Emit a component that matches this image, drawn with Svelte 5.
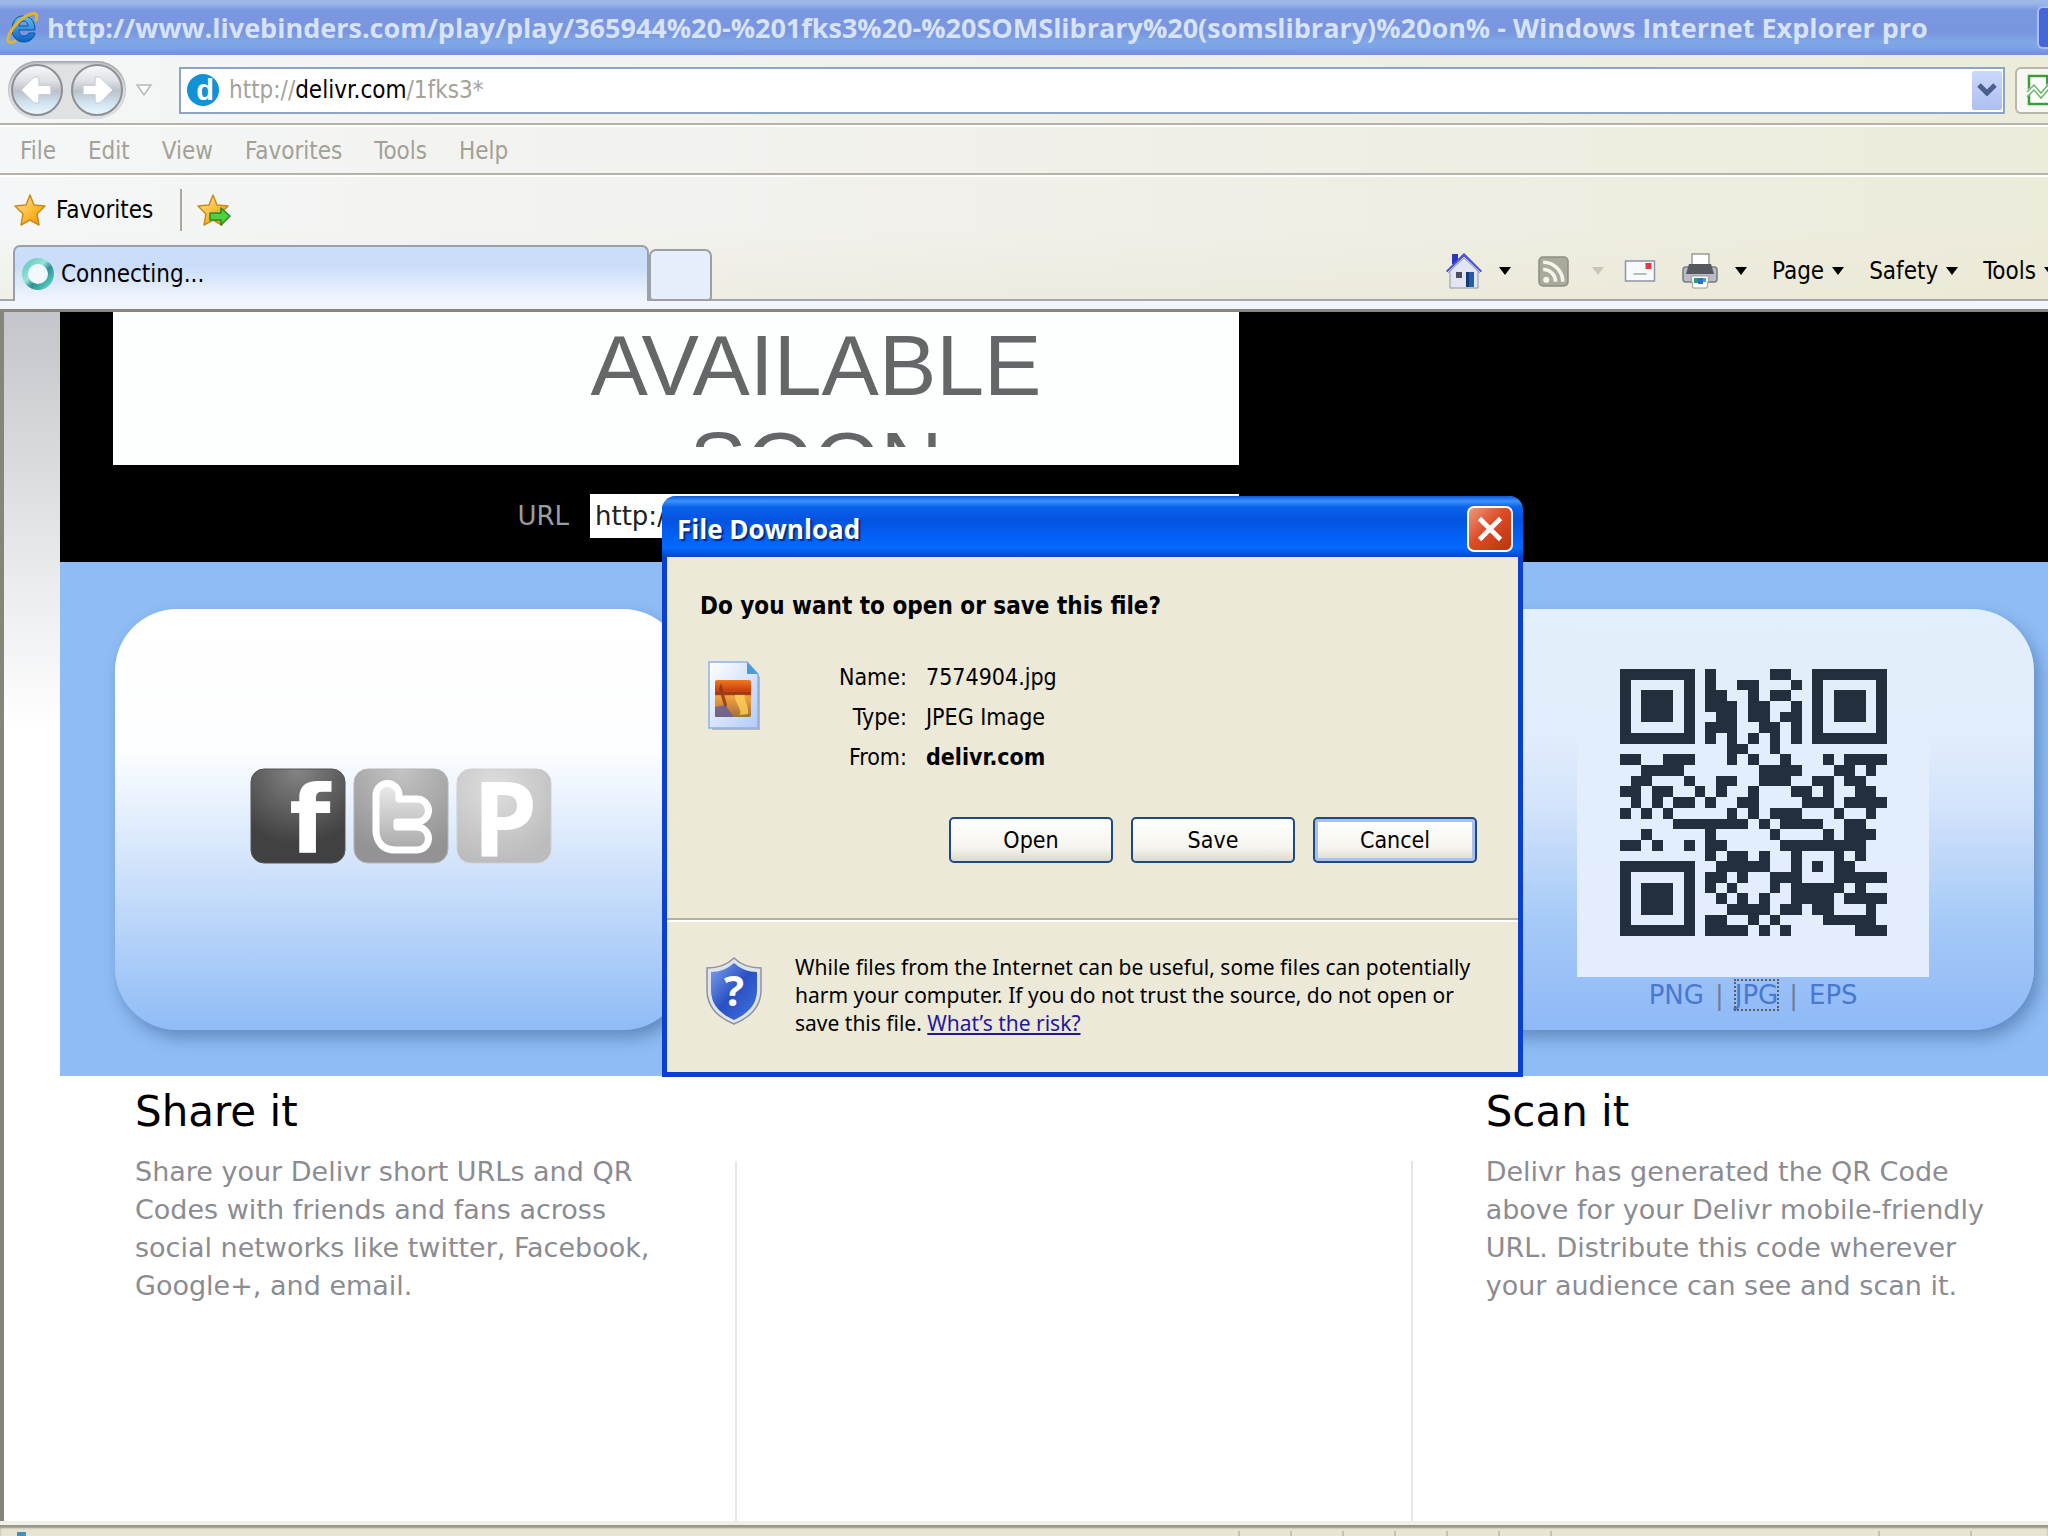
<script>
  const menus = ['File', 'Edit', 'View', 'Favorites', 'Tools', 'Help'];
  const commands = ['Page', 'Safety', 'Tools'];
  const formats = ['PNG', 'JPG', 'EPS'];

  // Dark modules of each QR row, as inclusive column ranges.
  const qrRows = [
    '0-6 8 14-15 18-24',
    '0 6 8 11-12 16 18 24',
    '0 2-4 6 8-9 12 14-15 18 20-22 24',
    '0 2-4 6 8-10 12-13 16 18 20-22 24',
    '0 2-4 6 9-10 12-13 15-16 18 20-22 24',
    '0 6 8-10 13-14 16 18 24',
    '0-6 8 10 12 14 16 18-24',
    '10-11 14',
    '0-1 4-6 10 12 15 19 21-24',
    '2-5 13-16 20-21 23',
    '1-2 6 9-10 13-15 18-19 21-22',
    '0-1 3-4 7 9 12 16-17 19 22-23',
    '1 3 5-6 8 11-12 17-19 21-24',
    '0 2 4 10 12 14-16 20 23',
    '5-11 13 15-18 21-22',
    '2 8 14 19 21-23',
    '0-1 3 6 8-9 15-22',
    '8 10-11 13 16 20 22',
    '0-6 9-13 16 18 20-21',
    '0 6 8-9 11 14-16 20-24',
    '0 2-4 6 8 10 14 16-20 22',
    '0 2-4 6 9 11 13 16-19 21-24',
    '0 2-4 6 10-13 15-16 18-19 23',
    '0 6 8-9 12 14 19-23',
    '0-6 8-11 13 15 22-24'
  ];
  const modules = qrRows.flatMap((row, y) =>
    row.split(' ').map((part) => {
      const [from, to = from] = part.split('-').map(Number);
      return { x: from, y, w: to - from + 1 };
    })
  );
</script>

<div class="window">
  <header class="titlebar">
    <svg class="ie" viewBox="0 0 34 36" aria-hidden="true">
      <defs>
        <linearGradient id="ieBlue" x1="0" y1="0" x2="0" y2="1">
          <stop offset="0" stop-color="#5cc4f5" /><stop offset="1" stop-color="#0b5fc0" />
        </linearGradient>
      </defs>
      <path d="M30 20H14c0 4 2 6 5 6 2 0 4-1 5-3h6c-1 6-6 9-11 9-8 0-12-6-12-13S11 6 18 6c8 0 12 6 12 14zM14 16h9c0-3-2-5-4-5-3 0-5 2-5 5z" fill="url(#ieBlue)" stroke="#0d4fa5" stroke-width="1" />
      <path d="M31 10c2-5 0-8-5-6C18 6 8 16 4 25c-3 7 0 9 6 6" fill="none" stroke="#e5b32b" stroke-width="3" stroke-linecap="round" />
    </svg>
    <h1>http://www.livebinders.com/play/play/365944%20-%201fks3%20-%20SOMSlibrary%20(somslibrary)%20on% - Windows Internet Explorer pro</h1>
    <button class="winbtn" aria-label="Minimize"></button>
  </header>

  <div class="navrow">
    <div class="travel">
      <button class="round" aria-label="Back">
        <svg viewBox="0 0 52 52"><path d="M9 26 23 12h5v9h13v10H28v9h-5z" fill="#fff" stroke="#c3c8d0" stroke-width="1" stroke-linejoin="round" /></svg>
      </button>
      <button class="round" aria-label="Forward">
        <svg viewBox="0 0 52 52"><path d="M43 26 29 12h-5v9H11v10h13v9h5z" fill="#fff" stroke="#c3c8d0" stroke-width="1" stroke-linejoin="round" /></svg>
      </button>
    </div>
    <button class="recent" aria-label="Recent pages">
      <svg viewBox="0 0 18 14"><path d="M2 2h14L9 12z" fill="#fafafa" stroke="#b9b9b9" stroke-width="1.5" /></svg>
    </button>
    <div class="address">
      <svg class="fav" viewBox="0 0 34 34" aria-hidden="true">
        <circle cx="17" cy="17" r="16" fill="#0f92d6" />
        <text x="19" y="27" text-anchor="middle" class="favd">d</text>
      </svg>
      <p>http://<b>delivr.com</b>/1fks3*</p>
      <button class="drop" aria-label="Show addresses">
        <svg viewBox="0 0 20 16"><path d="M2 3l8 8 8-8" fill="none" stroke="#4a5f8c" stroke-width="5" /></svg>
      </button>
    </div>
    <button class="compat" aria-label="Compatibility view">
      <svg viewBox="0 0 36 32">
        <path d="M2 30V2h18l9 9v19z" fill="#fff" stroke="#3c9b3c" stroke-width="2.5" />
        <path d="M20 2v9h9" fill="none" stroke="#3c9b3c" stroke-width="2" />
        <path d="M0 20l7-7 7 8 7-8 7 8 6-7" fill="none" stroke="#fff" stroke-width="5" />
        <path d="M0 18l7-7 7 8 7-8 7 8 6-7M0 23l7-7 7 8 7-8 7 8 6-7" fill="none" stroke="#6db56d" stroke-width="1.5" />
      </svg>
    </button>
  </div>

  <nav class="menubar" aria-label="Menu">
    {#each menus as item}<button>{item}</button>{/each}
  </nav>

  <div class="lower">
    <div class="favrow">
      <button class="favorites">
        <svg viewBox="0 0 34 34"><path d="M17 2l4 10 11 1-8 8 2 11-9-5-9 5 2-11-8-8 11-1z" fill="url(#gold)" stroke="#c98a1c" stroke-width="1.5" stroke-linejoin="round" />
          <defs><linearGradient id="gold" x1="0" y1="0" x2="1" y2="1"><stop offset="0" stop-color="#ffe9a0" /><stop offset=".6" stop-color="#fbb52a" /><stop offset="1" stop-color="#f08a10" /></linearGradient></defs>
        </svg>
        Favorites
      </button>
      <button class="addfav" aria-label="Add to Favorites Bar">
        <svg viewBox="0 0 36 34"><path d="M17 2l4 10 11 1-8 8 2 11-9-5-9 5 2-11-8-8 11-1z" fill="url(#gold)" stroke="#c98a1c" stroke-width="1.5" stroke-linejoin="round" />
          <path d="M14 20h11v-5l9 8-9 9v-5H14z" fill="#4fd03c" stroke="#27892a" stroke-width="1.5" stroke-linejoin="round" />
        </svg>
      </button>
    </div>

    <div class="tabrow">
      <button class="tab">
        <svg viewBox="0 0 34 34">
          <defs><linearGradient id="ring" x1="0" y1="0" x2="1" y2="1"><stop offset="0" stop-color="#5fc8bd" /><stop offset=".4" stop-color="#9be3da" /><stop offset=".6" stop-color="#2f8f95" /><stop offset="1" stop-color="#57d6c2" /></linearGradient></defs>
          <circle cx="17" cy="17" r="13" fill="#f3f8ff" stroke="url(#ring)" stroke-width="6" />
        </svg>
        Connecting...
      </button>
      <button class="newtab" aria-label="New tab"></button>
      <div class="cmdbar">
        <button class="ico home" aria-label="Home">
          <svg viewBox="0 0 36 36">
            <path d="M6 1h6v10H6z" fill="#2b35c4" />
            <path d="M4 18 18 5l14 13v17H4z" fill="#e3e6f2" stroke="#8d93ad" stroke-width="1" />
            <path d="M1 19 18 2l17 17" fill="none" stroke="#4a54d0" stroke-width="3" />
            <path d="M1 20 18 4l17 16" fill="none" stroke="#dfe3ff" stroke-width="1" />
            <rect x="10" y="19" width="6" height="6" fill="#4a4f60" /><rect x="20" y="19" width="8" height="15" fill="#235ea8" /><rect x="20" y="19" width="3" height="15" fill="#123a76" />
          </svg>
        </button>
        <span class="caret"></span>
        <button class="ico rss" aria-label="Feeds">
          <svg viewBox="0 0 30 30">
            <rect x="1" y="1" width="28" height="28" rx="4" fill="#aaa99b" stroke="#8f8e80" stroke-width="1.5" />
            <circle cx="8" cy="23" r="3" fill="#f5f4ea" />
            <path d="M5 13a12 12 0 0 1 12 12M5 6a19 19 0 0 1 19 19" fill="none" stroke="#f5f4ea" stroke-width="3.5" />
          </svg>
        </button>
        <span class="caret off"></span>
        <button class="ico mail" aria-label="Read mail">
          <svg viewBox="0 0 31 22">
            <rect x="1" y="1" width="29" height="20" fill="#f8f9fb" stroke="#8f95a8" stroke-width="1.5" />
            <rect x="21" y="3" width="6" height="6" fill="#dd3b46" /><path d="M9 14h13" stroke="#9aa" stroke-width="1.5" />
          </svg>
        </button>
        <button class="ico print" aria-label="Print">
          <svg viewBox="0 0 36 36">
            <rect x="10" y="1" width="17" height="14" fill="#fff" stroke="#9a9a9a" stroke-width="1.5" />
            <rect x="1" y="14" width="34" height="15" rx="3" fill="#b9bcc4" stroke="#777b84" stroke-width="1.5" />
            <path d="M7 11h22l3 10H4z" fill="#55585e" />
            <path d="M9 23h18l-2 12H11z" fill="#fff" stroke="#999" stroke-width="1" />
            <path d="M12 25h4v5h-4z" fill="#2c9c6a" /><path d="M16 25h5v6h-5z" fill="#2b6fd0" /><path d="M21 25h3v4h-3z" fill="#24b6c0" />
          </svg>
        </button>
        <span class="caret"></span>
        {#each commands as cmd}
          <button class="cmd">{cmd}<span class="caret"></span></button>
        {/each}
      </div>
    </div>
  </div>

  <main class="viewport">
    <div class="page">
      <section class="hero">
        <div class="preview"><p>AVAILABLE<br />SOON</p></div>
        <div class="urlrow">
          <label for="url">URL</label>
          <input id="url" type="text" value="http://delivr.com/1fks3" />
        </div>
      </section>

      <section class="band">
        <div class="card">
          <div class="social">
            <a href="#facebook" aria-label="Facebook">
              <svg viewBox="0 0 96 96">
                <defs><radialGradient id="fbg" cx=".5" cy="0" r=".8"><stop offset="0" stop-color="#858585" /><stop offset="1" stop-color="#414142" /></radialGradient></defs>
                <rect x="1" y="1" width="94" height="94" rx="13" fill="url(#fbg)" stroke="#555" />
                <text x="60" y="85" text-anchor="middle" class="ff">f</text>
              </svg>
            </a>
            <a href="#twitter" aria-label="Twitter">
              <svg viewBox="0 0 96 96">
                <defs>
                  <radialGradient id="twg" cx=".5" cy="0" r=".9"><stop offset="0" stop-color="#c4c4c4" /><stop offset="1" stop-color="#939393" /></radialGradient>
                  <linearGradient id="twt" x1="0" y1="0" x2="0" y2="1"><stop offset="0" stop-color="#ececec" /><stop offset="1" stop-color="#a9a9a9" /></linearGradient>
                </defs>
                <rect x="1" y="1" width="94" height="94" rx="14" fill="url(#twg)" stroke="#b5b5b5" />
                <path d="M23 27a11 11 0 0 1 23 0v4h18a11 11 0 0 1 0 23H44v5h20a11 11 0 0 1 0 23H42c-12 0-19-8-19-20z" fill="url(#twt)" stroke="#fff" stroke-width="7" stroke-linejoin="round" />
              </svg>
            </a>
            <a href="#posterous" aria-label="Posterous">
              <svg viewBox="0 0 96 96">
                <defs><radialGradient id="pg" cx=".4" cy=".2" r=".8"><stop offset="0" stop-color="#dedede" /><stop offset="1" stop-color="#bcbcbc" /></radialGradient></defs>
                <rect x="1" y="1" width="94" height="94" rx="14" fill="url(#pg)" stroke="#cfcfcf" />
                <text x="49" y="88" text-anchor="middle" class="pp">P</text>
              </svg>
            </a>
          </div>
        </div>
        <div class="card"></div>
        <div class="card tinted">
          <div class="qr">
            <svg viewBox="0 0 25 25" shape-rendering="crispEdges" role="img" aria-label="QR code">
              {#each modules as m}<rect x={m.x} y={m.y} width={m.w} height="1" />{/each}
            </svg>
          </div>
          <p class="formats">
            {#each formats as f, i}{#if i}<span>|</span>{/if}<a href="#{f}" class:focused={f === 'JPG'}>{f}</a>{/each}
          </p>
        </div>
      </section>

      <section class="info">
        <article>
          <h2>Share it</h2>
          <p>Share your Delivr short URLs and QR Codes with friends and fans across social networks like twitter, Facebook, Google+, and email.</p>
        </article>
        <article><h2></h2><p></p></article>
        <article>
          <h2>Scan it</h2>
          <p>Delivr has generated the QR Code above for your Delivr mobile-friendly URL. Distribute this code wherever your audience can see and scan it.</p>
        </article>
      </section>
    </div>
  </main>

  <footer class="status">
    <span class="dot"></span>
    <div class="cells"><i></i><i></i><i></i><i></i><i></i><i></i><i></i><i class="zone"></i><i class="prot"></i></div>
  </footer>

  <div class="dialog" role="dialog" aria-labelledby="dlgtitle">
    <div class="dlgbar">
      <h2 id="dlgtitle">File Download</h2>
      <button class="close" aria-label="Close">
        <svg viewBox="0 0 24 24"><path d="M3 3l18 18M21 3L3 21" stroke="#fff" stroke-width="4" /></svg>
      </button>
    </div>
    <div class="dlgmain">
      <h3>Do you want to open or save this file?</h3>
      <div class="file">
        <svg class="jpg" viewBox="0 0 54 70" aria-hidden="true">
          <defs>
            <linearGradient id="sheet" x1="0" y1="0" x2="1" y2="1"><stop offset="0" stop-color="#fff" /><stop offset="1" stop-color="#b3cbf7" /></linearGradient>
            <linearGradient id="sun" x1="0" y1="0" x2="0" y2="1"><stop offset="0" stop-color="#f07a1c" /><stop offset=".3" stop-color="#c83c10" /><stop offset=".45" stop-color="#f6a040" /><stop offset="1" stop-color="#a0703c" /></linearGradient>
          </defs>
          <path d="M4 4h38l10 12v53H4z" fill="#8d8f94" opacity=".55" />
          <path d="M1 1h38l11 12v54H1z" fill="url(#sheet)" stroke="#8fb0ea" stroke-width="1.5" />
          <path d="M39 1v12h11z" fill="#4a9bd8" />
          <rect x="7" y="19" width="36" height="37" rx="2" fill="url(#sun)" />
          <path d="M27 33h10c-2 6 4 10 3 20l-8 1c2-8-6-12-5-21z" fill="#ffd65c" opacity=".75" />
          <path d="M7 31h36v3H7zM13 22l6 22-2 4-6-20z" fill="#8a3412" opacity=".8" />
          <path d="M7 46l10-2 9 12H7z" fill="#5a5ba8" opacity=".7" />
        </svg>
        <dl>
          <dt>Name:</dt><dd>7574904.jpg</dd>
          <dt>Type:</dt><dd>JPEG Image</dd>
          <dt>From:</dt><dd><b>delivr.com</b></dd>
        </dl>
      </div>
      <div class="actions">
        <button>Open</button><button>Save</button><button class="default">Cancel</button>
      </div>
    </div>
    <div class="warn">
      <svg class="shield" viewBox="0 0 56 68" aria-hidden="true">
        <defs><linearGradient id="shd" x1="0" y1="0" x2="1" y2="1"><stop offset="0" stop-color="#7fa3ee" /><stop offset=".5" stop-color="#2a50c4" /><stop offset="1" stop-color="#3f74e0" /></linearGradient></defs>
        <path d="M28 1c7 7 16 10 27 10v22c0 16-10 27-27 34C11 60 1 49 1 33V11c11 0 20-3 27-10z" fill="#dfe3ea" stroke="#8d939f" stroke-width="1.5" />
        <path d="M28 6c7 6 14 9 23 9v18c0 14-8 23-23 30C13 56 5 47 5 33V15c9 0 16-3 23-9z" fill="url(#shd)" />
        <text x="28" y="49" text-anchor="middle" class="qm">?</text>
      </svg>
      <p>While files from the Internet can be useful, some files can potentially<br />harm your computer. If you do not trust the source, do not open or<br />save this file. <a href="#risk">What’s the risk?</a></p>
    </div>
  </div>
</div>

<style>
  :global(body) { margin: 0; background: #ece9d8; }
  * { box-sizing: border-box; }
  button { font: inherit; color: inherit; background: none; border: 0; padding: 0; margin: 0; }
  svg { display: block; overflow: visible; }
  h1, h2, h3, p, dl, dd { margin: 0; }

  .window {
    position: relative; display: flex; flex-direction: column; min-height: 100vh; overflow: hidden;
    font: 24px/28px 'DejaVu Sans Condensed', 'DejaVu Sans', sans-serif; color: #000;
    background: linear-gradient(90deg, #f4f7f7 0, #f1f0eb 45%, #edebda 100%);
  }
  .titlebar {
    display: flex; align-items: center; height: 55px; padding-left: 5px; overflow: hidden;
    background: linear-gradient(#9db9e9 0, #9ab5e8 4px, #7b97e0 10px, #7a95df 32px, #7fa8e6 42px, #7ca3e6 48px, #7790e2 53px);
  }
  .ie { width: 34px; height: 36px; flex: none; margin-right: 8px; }
  h1 { flex: 1; white-space: nowrap; font: bold 27px/36px 'Open Sans', 'Noto Sans', sans-serif; color: #d6e3fa; }
  .winbtn { width: 11px; height: 43px; border: 2px solid #a9bdf0; border-right: 0; border-radius: 6px 0 0 6px; background: #4467d8; }

  .navrow { display: flex; align-items: center; height: 70px; padding: 2px 0 0 8px; border-bottom: 2px solid #b5b3a8; overflow: hidden; }
  .travel { display: flex; gap: 8px; padding: 3px; border-radius: 30px; background: #dfe1e3; box-shadow: inset 0 2px 3px #9a9da2; }
  .round { width: 52px; height: 52px; border-radius: 50%; border: 2px solid #8d9096; background: linear-gradient(#f6f7f9 0, #dfe2e6 30%, #bcc1c9 52%, #cfe0ee 75%, #e9f8ff 100%); }
  .round svg { width: 48px; height: 48px; }
  .recent { margin: 0 26px 0 9px; }
  .recent svg { width: 18px; height: 14px; }
  .address { flex: 1; display: flex; align-items: center; height: 47px; padding: 0 1px 0 5px; border: 2px solid #8ba6c4; background: #fff; }
  .fav { width: 34px; height: 34px; margin-right: 9px; }
  .favd { font: bold 29px 'Liberation Sans', sans-serif; fill: #fff; }
  .address p { flex: 1; color: #a5a29a; }
  .address b { font-weight: normal; color: #000; }
  .drop { width: 30px; height: 39px; border-radius: 2px; background: linear-gradient(#c9d8fb, #aebff0); display: grid; place-items: center; }
  .drop svg { width: 20px; height: 16px; }
  .compat { width: 33px; height: 47px; margin-left: 10px; padding-left: 10px; overflow: hidden; border: 2px solid #b9b7ab; border-right: 0; border-radius: 6px 0 0 6px; background: #f8f8f3; }
  .compat svg { width: 36px; height: 32px; }

  .menubar { display: flex; gap: 32px; align-items: center; height: 50px; padding: 2px 20px 0; color: #a3a096; border-top: 2px solid #fff; border-bottom: 2px solid #b5b3a8; }
  .lower { border-top: 2px solid #fff; background: linear-gradient(transparent, transparent 40%, rgba(232, 229, 208, .45)); }
  .favrow { display: flex; align-items: center; height: 66px; padding-left: 13px; }
  .favorites { display: flex; align-items: center; gap: 9px; height: 42px; padding-right: 27px; border-right: 2px solid #a9a79c; }
  .favorites svg { width: 34px; height: 34px; }
  .addfav { margin-left: 14px; }
  .addfav svg { width: 36px; height: 34px; }

  .tabrow { display: flex; align-items: flex-end; height: 66px; padding-left: 13px; border-bottom: 8px solid #f2f5fd; box-shadow: inset 0 -2px #a4a6ae; }
  .tab { display: flex; align-items: center; gap: 6px; width: 636px; height: 56px; padding-left: 6px; border: 2px solid #9b9fa8; border-bottom: 0; border-radius: 7px 7px 0 0; background: linear-gradient(#cbdff9 0, #c9ddf8 35%, #e6eefd 80%, #f2f5fd); }
  .tab svg { width: 34px; height: 34px; }
  .newtab { width: 63px; height: 52px; border: 2px solid #9b9fa8; border-radius: 7px 7px 4px 4px; background: #e7eefb; }
  .cmdbar { flex: 1; display: flex; align-items: center; justify-content: flex-end; height: 60px; margin-right: -8px; }
  .home svg, .print svg { width: 36px; height: 36px; }
  .rss svg { width: 31px; height: 31px; }
  .mail svg { width: 32px; height: 22px; }
  .home { margin-right: 17px; }
  .rss { margin: 0 23px 0 27px; }
  .mail { margin: 0 26px 0 20px; }
  .print { margin-right: 17px; }
  .caret { flex: none; border: 6px solid transparent; border-top: 8px solid #000; border-bottom: 0; }
  .caret.off { border-top-color: #c9c7ba; }
  .cmd { display: flex; align-items: center; gap: 8px; margin-left: 25px; }

  .viewport { flex: 1; display: flex; border: solid #85857a; border-width: 3px 0 0 4px; background: #fff; }
  .page { flex: 1; display: flex; flex-direction: column; min-width: 0; padding-left: 56px; background: linear-gradient(#c3c5ca 0, #e7e9eb 250px, #fff 420px); overflow: hidden; }
  .hero { background: #000; padding: 0 0 24px 53px; }
  .preview { width: 1126px; height: 153px; padding: 5px 0 18px 280px; background: #fdfefe; }
  .preview p { height: 130px; overflow: hidden; text-align: center; font: 86px/97px 'Liberation Sans', Arial, sans-serif; color: #656667; }
  .urlrow { display: flex; align-items: center; justify-content: flex-end; gap: 21px; width: 1126px; padding-top: 29px; font: 26px/30px 'DejaVu Sans', sans-serif; color: #9a9da0; }
  .urlrow input { width: 649px; height: 44px; border: 0; border-radius: 0; padding: 0 5px; font: inherit; color: #222; background: #fff; }

  .band { display: grid; grid-template-columns: repeat(3, 1fr); gap: 105px; padding: 47px 14px 46px 55px; background: #8fbcf4; }
  .card { display: flex; flex-direction: column; align-items: center; justify-content: center; height: 421px; border-radius: 62px; background: linear-gradient(#fff 0, #fdfeff 33%, #dbe9fc 55%, #8fbcf6 100%); box-shadow: 5px 8px 16px rgba(40, 80, 130, .45); }
  .social { display: flex; gap: 7px; padding: 0 0 8px 2px; }
  .social svg { width: 96px; height: 96px; }
  .ff { font: bold 95px 'DejaVu Sans', sans-serif; fill: #fff; }
  .pp { font: bold 104px 'Open Sans', sans-serif; fill: #fff; }
  .tinted { justify-content: flex-start; padding: 18px 0 0 8px; background: linear-gradient(#dff0fe 0, #e3eefb 4%, #e2edfb 30%, #d3e3fb 47%, #a4c9f7 75%, #8fb9f7 100%); }
  .qr { display: grid; place-items: center; width: 352px; height: 350px; background: linear-gradient(#e3eefb, #e3edfd); }
  .qr svg { width: 267px; height: 267px; fill: #242f3d; }
  .formats { display: flex; align-items: center; gap: 11px; padding-top: 3px; font: 26px/30px 'DejaVu Sans', sans-serif; color: #6d7f96; }
  .formats a { color: #4a78d0; text-decoration: none; }
  .formats .focused { outline: 2px dotted #5c5f60; outline-offset: -1px; }

  .info { flex: 1; display: grid; grid-template-columns: repeat(3, 1fr); margin-right: -38px; background: #fff; }
  article { display: flex; flex-direction: column; }
  article h2 { height: 77px; padding: 11px 0 0 75px; font: 42px/50px 'DejaVu Sans', sans-serif; }
  article p { flex: 1; padding: 0 70px 0 75px; font: 27px/38px 'DejaVu Sans', sans-serif; color: #8b8c92; }
  article + article p { background: linear-gradient(#e6e6ea, #e6e6ea) 0 8px / 2px 100% no-repeat; }

  .status { display: flex; height: 15px; padding: 2px 0 0; border-top: 4px solid #f2f0e6; box-shadow: inset 0 3px 2px #97958a; background: #e8e4d3; }
  .dot { width: 9px; height: 4px; margin: 5px 0 0 17px; background: #3d93bd; }
  .cells { flex: 1; display: flex; justify-content: flex-end; }
  .cells i { width: 52px; margin-top: 4px; border-left: 2px solid #c5c2b2; }
  .cells .zone { width: 92px; }
  .cells i:nth-child(7) { width: 328px; }
  .cells .prot { width: 78px; }

  .dialog { position: absolute; left: 662px; top: 496px; width: 861px; border: 5px solid #0a3fd0; border-top: 0; border-radius: 14px 14px 0 0; background: #ece9d8; }
  .dlgbar { display: flex; align-items: center; justify-content: space-between; height: 61px; margin: 0 -5px; padding: 4px 10px 0 15px; border-radius: 14px 14px 0 0; background: linear-gradient(#0a56dc 0, #3c93fb 5px, #0a62ea 11px, #0453e0 24px, #0260f5 40px, #0569ff 52px, #0347c8 61px); }
  .dlgbar h2 { font: bold 26px/36px 'Open Sans', sans-serif; color: #fff; text-shadow: 2px 2px 1px #0a2a80; }
  .close { display: grid; place-items: center; width: 46px; height: 46px; border: 2px solid #fff; border-radius: 7px; background: linear-gradient(135deg, #ef9a80, #dd4c26 45%, #b93410); }
  .close svg { width: 28px; height: 28px; }
  .dlgmain { height: 363px; padding: 35px 41px 0 33px; border-bottom: 2px solid #b4b1a1; font: 23px/28px 'DejaVu Sans Condensed', sans-serif; }
  h3 { font: bold 24px/28px 'DejaVu Sans Condensed', sans-serif; }
  .file { display: flex; gap: 75px; margin-top: 37px; }
  .jpg { width: 54px; height: 70px; margin: 4px 0 0 8px; }
  dl { display: grid; grid-template-columns: 70px auto; column-gap: 19px; line-height: 40px; }
  dt { text-align: right; }
  .actions { display: flex; justify-content: flex-end; gap: 18px; margin-top: 40px; }
  .actions button { width: 164px; height: 46px; border: 2px solid #1f4a80; border-radius: 5px; background: linear-gradient(#fff, #f5f4ee 70%, #dcd8cb); }
  .actions .default { box-shadow: inset 0 0 0 3px #a9c1f2; }
  .warn { display: flex; align-items: flex-start; gap: 33px; padding: 31px 0 35px 39px; border-top: 2px solid #fff; font: 21px/28px 'Noto Sans', sans-serif; }
  .shield { width: 56px; height: 68px; margin-top: 4px; }
  .qm { font: bold 42px 'Open Sans', sans-serif; fill: #fff; }
  .warn a { color: #23189c; }
</style>
